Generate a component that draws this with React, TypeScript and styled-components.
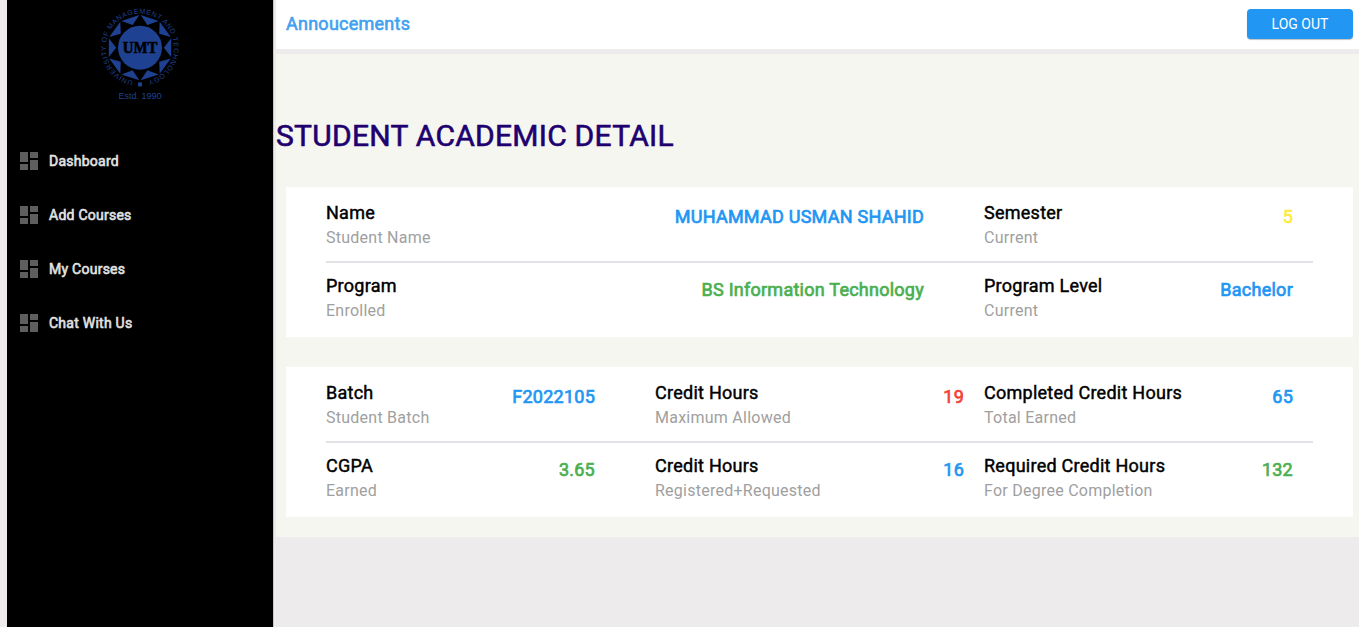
import React from "react";
import styled, { createGlobalStyle } from "styled-components";

const Global = createGlobalStyle`
  * { box-sizing: border-box; }
  body { margin: 0; background: #edebeb; font-family: Roboto, sans-serif; overflow: hidden; }
`;
const Page = styled.div`
  display: flex;
  height: 627px;
  padding-left: 7px;
`;
const Sidebar = styled.aside`
  width: 266px;
  flex: none;
  background: #000;
  display: flex;
  flex-direction: column;
`;
const Brand = styled.div`
  height: 134px;
  display: flex;
  justify-content: center;
`;
const NavItem = styled.a`
  display: flex;
  align-items: center;
  height: 54px;
  padding-left: 10px;
  gap: 8px;
  color: #e2e2e2;
  font-size: 14px;
  letter-spacing: 0.25px;
  -webkit-text-stroke: 0.6px currentColor;
  svg { fill: #5e5e5e; flex: none; }
`;
const Main = styled.main`
  flex: 1;
  min-width: 0;
  border-left: 1px solid #c8c8c8;
  padding-left: 2px;
`;
const TopBar = styled.header`
  height: 49px;
  background: #fff;
  display: flex;
  align-items: center;
  justify-content: space-between;
  padding: 0 6px 2px 10px;
`;
const TopLink = styled.a`
  color: #42a0f0;
  font-size: 18px;
  letter-spacing: 0.25px;
  -webkit-text-stroke: 0.6px currentColor;
`;
const LogoutButton = styled.button`
  width: 106px;
  height: 30px;
  border: 0;
  border-radius: 4px;
  background: #2196f3;
  box-shadow: 0 1px 1px rgba(0, 0, 0, 0.25);
  color: #fff;
  font: 400 14px Roboto, sans-serif;
`;
const Content = styled.section`
  margin-top: 5px;
  height: 483px;
  background: #f5f6f0;
  padding: 62px 6px 0 0;
`;
const Heading = styled.h1`
  margin: 0 0 31px;
  font-size: 30px;
  line-height: 40px;
  font-weight: 400;
  letter-spacing: 0.26px;
  -webkit-text-stroke: 0.6px currentColor;
  color: #20006f;
`;
const Card = styled.div`
  height: 150px;
  margin: 0 0 30px 10px;
  padding: 3px 40px 0;
  background: #fff;
`;
const Row = styled.div`
  display: grid;
  grid-template-columns: repeat(3, 1fr);
  height: 73px;
  padding-top: 10px;
  &:not(:last-child) { border-bottom: 2px solid #e1e1e6; }
`;
const Cell = styled.div<{ $span: number; $end: number }>`
  grid-column: span ${(p) => p.$span};
  display: flex;
  justify-content: space-between;
  padding-right: ${(p) => p.$end}px;
`;
const Label = styled.div`
  font-size: 18px;
  line-height: 26px;
  letter-spacing: 0.26px;
  -webkit-text-stroke: 0.45px currentColor;
  color: #000;
`;
const Caption = styled.div`
  font-size: 16px;
  line-height: 24px;
  letter-spacing: 0.25px;
  color: #a0a0a0;
`;
const Value = styled.div<{ $color: string }>`
  padding-top: 4px;
  font-size: 18px;
  line-height: 26px;
  letter-spacing: 0.25px;
  -webkit-text-stroke: 0.7px currentColor;
  color: ${(p) => p.$color};
`;

const blue = "#2196f3";
const green = "#4caf50";
const red = "#f44336";
const yellow = "#ffeb3b";

type Item = { label: string; caption: string; value: string; color: string; span?: number; end: number };
const cards: Item[][][] = [
  [
    [
      { label: "Name", caption: "Student Name", value: "MUHAMMAD USMAN SHAHID", color: blue, span: 2, end: 60 },
      { label: "Semester", caption: "Current", value: "5", color: yellow, end: 20 },
    ],
    [
      { label: "Program", caption: "Enrolled", value: "BS Information Technology", color: green, span: 2, end: 60 },
      { label: "Program Level", caption: "Current", value: "Bachelor", color: blue, end: 20 },
    ],
  ],
  [
    [
      { label: "Batch", caption: "Student Batch", value: "F2022105", color: blue, end: 60 },
      { label: "Credit Hours", caption: "Maximum Allowed", value: "19", color: red, end: 20 },
      { label: "Completed Credit Hours", caption: "Total Earned", value: "65", color: blue, end: 20 },
    ],
    [
      { label: "CGPA", caption: "Earned", value: "3.65", color: green, end: 60 },
      { label: "Credit Hours", caption: "Registered+Requested", value: "16", color: blue, end: 20 },
      { label: "Required Credit Hours", caption: "For Degree Completion", value: "132", color: green, end: 20 },
    ],
  ],
];

const Logo = () => (
  <svg width="100" height="110" viewBox="90 0 100 110" fill="#1f4192">
    <circle cx="140" cy="47.7" r="22" />
    {Array.from({ length: 10 }, (_, i) => (
      <path key={i} d="M-9.4 -31.2L9.4 -31.2L0 -23.8Z" transform={`translate(140 47.7) rotate(${18 + i * 36})`} />
    ))}
    <rect x="138" y="82.4" width="4" height="4" />
    <path id="ring" fill="none" d="M133 80.9A34 34 0 1 1 147.6 80.7" />
    <text fontFamily="Liberation Sans, sans-serif" fontSize="7">
      <textPath href="#ring" textLength="198">UNIVERSITY OF MANAGEMENT AND TECHNOLOGY</textPath>
    </text>
    <text
      x="122.7" y="53.2" textLength="34.6" lengthAdjust="spacingAndGlyphs"
      fill="#000" stroke="#000" strokeWidth="0.6"
      fontFamily="Liberation Serif, serif" fontWeight="700" fontSize="16.5"
    >UMT</text>
    <text x="118.6" y="99" fontFamily="Liberation Sans, sans-serif" fontSize="9" textLength="43">Estd. 1990</text>
  </svg>
);

const DashboardIcon = () => (
  <svg width="24" height="24" viewBox="0 0 24 24">
    <path d="M3 13h8V3H3v10zm0 8h8v-6H3v6zm10 0h8V11h-8v10zm0-18v6h8V3h-8z" />
  </svg>
);

export default function App() {
  return (
    <Page>
      <Global />
      <Sidebar>
        <Brand><Logo /></Brand>
        {["Dashboard", "Add Courses", "My Courses", "Chat With Us"].map((t) => (
          <NavItem key={t}><DashboardIcon />{t}</NavItem>
        ))}
      </Sidebar>
      <Main>
        <TopBar>
          <TopLink>Annoucements</TopLink>
          <LogoutButton>LOG OUT</LogoutButton>
        </TopBar>
        <Content>
          <Heading>STUDENT ACADEMIC DETAIL</Heading>
          {cards.map((rows, i) => (
            <Card key={i}>
              {rows.map((items, j) => (
                <Row key={j}>
                  {items.map((it, k) => (
                    <Cell key={k} $span={it.span ?? 1} $end={it.end}>
                      <div>
                        <Label>{it.label}</Label>
                        <Caption>{it.caption}</Caption>
                      </div>
                      <Value $color={it.color}>{it.value}</Value>
                    </Cell>
                  ))}
                </Row>
              ))}
            </Card>
          ))}
        </Content>
      </Main>
    </Page>
  );
}
